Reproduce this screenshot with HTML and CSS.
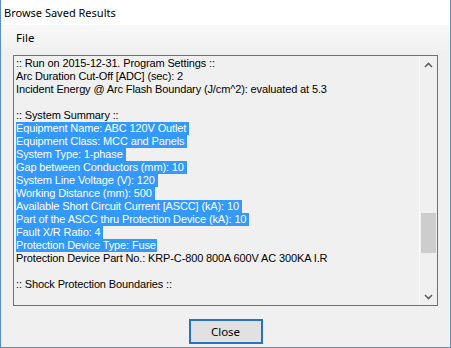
FILE: index.html
```html
<!DOCTYPE html>
<html lang="en">
<head>
    <meta charset="UTF-8">
    <title>Browse Saved Results</title>
    <link rel="stylesheet" href="styles.css">
</head>
<body>
<div class="window">
    <div class="titlebar">Browse Saved Results</div>
    <div class="menubar">
        <span class="menu-item">File</span>
    </div>
    <div class="content">
        <div class="textbox">
            <div class="lines">
                <div class="line">:: Run on 2015-12-31. Program Settings ::</div>
                <div class="line">Arc Duration Cut-Off [ADC] (sec): 2</div>
                <div class="line">Incident Energy @ Arc Flash Boundary (J/cm^2): evaluated at 5.3</div>
                <div class="line"> </div>
                <div class="line">:: System Summary ::</div>
                <div class="line"><span class="sel">Equipment Name: ABC 120V Outlet</span></div>
                <div class="line"><span class="sel">Equipment Class: MCC and Panels</span></div>
                <div class="line"><span class="sel">System Type: 1-phase</span></div>
                <div class="line"><span class="sel">Gap between Conductors (mm): 10</span></div>
                <div class="line"><span class="sel">System Line Voltage (V): 120</span></div>
                <div class="line"><span class="sel">Working Distance (mm): 500</span></div>
                <div class="line"><span class="sel">Available Short Circuit Current [ASCC] (kA): 10</span></div>
                <div class="line"><span class="sel">Part of the ASCC thru Protection Device (kA): 10</span></div>
                <div class="line"><span class="sel">Fault X/R Ratio: 4</span></div>
                <div class="line"><span class="sel last">Protection Device Type: Fuse</span></div>
                <div class="line">Protection Device Part No.: KRP-C-800 800A 600V AC 300KA I.R</div>
                <div class="line"> </div>
                <div class="line">:: Shock Protection Boundaries ::</div>
            </div>
            <div class="scrollbar">
                <div class="arrow">
                    <svg width="9" height="6" viewBox="0 0 9 6"><polyline points="1,5 4.5,1.5 8,5" fill="none" stroke="#606060" stroke-width="1.6"/></svg>
                </div>
                <div class="track">
                    <div class="thumb"></div>
                </div>
                <div class="arrow">
                    <svg width="9" height="6" viewBox="0 0 9 6"><polyline points="1,1 4.5,4.5 8,1" fill="none" stroke="#606060" stroke-width="1.6"/></svg>
                </div>
            </div>
        </div>
        <div class="buttons">
            <button class="btn">Close</button>
        </div>
    </div>
</div>
</body>
</html>
```

FILE: styles.css
```css
body {
    margin: 0;
    padding: 0;
    background-color: #f0f0f0;
}

.window {
    width: 451px;
    height: 348px;
    box-sizing: border-box;
    border: 1px solid #5b8dc9;
    border-top: none;
    background-color: #f0f0f0;
    display: flex;
    flex-direction: column;
    overflow: hidden;
}

.titlebar {
    height: 25px;
    background-color: #fff;
    font-family: "Noto Sans", sans-serif;
    font-size: 11px;
    color: #000;
    padding-left: 3px;
    line-height: 25px;
}

.menubar {
    height: 25px;
    background: linear-gradient(#f9f9f9, #f1f1f1);
    font-family: "Noto Sans", sans-serif;
    font-size: 11.5px;
    line-height: 25px;
}

.menu-item {
    padding-left: 15px;
}

.content {
    flex: 1;
    display: flex;
    flex-direction: column;
    padding: 5px 12px 0 12px;
}

.textbox {
    height: 251px;
    box-sizing: border-box;
    border: 1px solid #3c7fb7;
    background-color: #f0f0f0;
    display: flex;
}

.lines {
    flex: 1;
    padding: 1px 0 0 2px;
    overflow: hidden;
    font-family: "Liberation Sans", Arial, sans-serif;
    font-size: 11px;
    letter-spacing: -0.13px;
    line-height: 13px;
    color: #000;
}

.line {
    white-space: pre;
    height: 13px;
}

.sel {
    background-color: #3399ff;
    color: #fff;
    padding-right: 3px;
    display: inline-block;
}

.sel.last {
    padding-right: 1px;
}

.scrollbar {
    width: 17px;
    border-left: 1px solid #fafafa;
    display: flex;
    flex-direction: column;
}

.arrow {
    height: 17px;
    display: flex;
    align-items: center;
    justify-content: center;
}

.track {
    flex: 1;
    display: flex;
    flex-direction: column;
}

.thumb {
    margin-top: 140px;
    margin-left: 1px;
    width: 15px;
    height: 40px;
    background-color: #cdcdcd;
}

.buttons {
    display: flex;
    justify-content: center;
    padding-top: 13px;
}

.btn {
    width: 74px;
    height: 25px;
    box-sizing: border-box;
    border: 2px solid #2a72c0;
    background-color: #e1e1e1;
    font-family: "Noto Sans", sans-serif;
    font-size: 11.5px;
    color: #000;
    padding: 0;
}
```
